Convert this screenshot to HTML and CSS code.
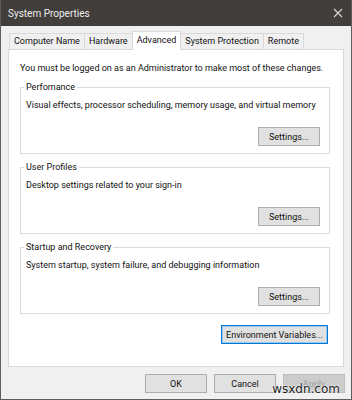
FILE: index.html
```html
<!DOCTYPE html>
<html lang="en">
<head>
  <meta charset="UTF-8">
  <title>System Properties</title>
  <link rel="stylesheet" href="styles.css">
</head>
<body>
  <div class="window">
    <div class="titlebar">
      <span class="title">System Properties</span>
      <svg class="close" width="10" height="10" viewBox="0 0 10 10">
        <path d="M1 1 L9 9 M9 1 L1 9" stroke="#d6d6d6" stroke-width="1.1" fill="none"/>
      </svg>
    </div>

    <div class="tabs">
      <div class="tab">Computer Name</div>
      <div class="tab">Hardware</div>
      <div class="tab active">Advanced</div>
      <div class="tab">System Protection</div>
      <div class="tab">Remote</div>
    </div>

    <div class="panel">
      <p class="notice">You must be logged on as an Administrator to make most of these changes.</p>

      <fieldset class="group">
        <legend>Perfomance</legend>
        <p class="desc">Visual effects, processor scheduling, memory usage, and virtual memory</p>
        <div class="group-actions"><button class="btn">Settings...</button></div>
      </fieldset>

      <fieldset class="group">
        <legend>User Profiles</legend>
        <p class="desc">Desktop settings related to your sign-in</p>
        <div class="group-actions"><button class="btn">Settings...</button></div>
      </fieldset>

      <fieldset class="group">
        <legend>Startup and Recovery</legend>
        <p class="desc">System startup, system failure, and debugging information</p>
        <div class="group-actions"><button class="btn">Settings...</button></div>
      </fieldset>

      <div class="env-row">
        <button class="btn btn-default env">Environment Variables...</button>
      </div>
    </div>

    <div class="footer">
      <button class="btn">OK</button>
      <button class="btn">Cancel</button>
      <button class="btn" disabled>Apply</button>
    </div>

    <span class="watermark">wsxdn.com</span>
  </div>
</body>
</html>
```

FILE: styles.css
```css
body {
  margin: 0;
  padding: 0;
  background: #f0f0f0;
}

.window {
  position: relative;
  width: 352px;
  height: 400px;
  box-sizing: border-box;
  border: 1px solid #5e5e5e;
  border-top: none;
  background: #f0f0f0;
  display: flex;
  flex-direction: column;
  font-family: Roboto, "Liberation Sans", Arial, sans-serif;
  font-size: 9px;
  color: #111;
  overflow: hidden;
}

.titlebar {
  height: 26px;
  margin: 0 -1px;
  padding: 0 9px 0 8px;
  background: #423e3b;
  color: #ededed;
  display: flex;
  align-items: center;
  justify-content: space-between;
  font-size: 10px;
  flex-shrink: 0;
}

.close {
  display: block;
}

/* tab strip */
.tabs {
  display: flex;
  align-items: flex-end;
  padding: 7px 0 0 8px;
  height: 16px;
  position: relative;
  z-index: 1;
}

.tab {
  height: 15px;
  line-height: 15px;
  padding: 0 4px;
  border: 1px solid #d9d9d9;
  border-bottom: none;
  margin-right: -1px;
  background: #f0f0f0;
}

.tab.active {
  height: 18px;
  line-height: 17px;
  margin-bottom: -1px;
  background: #fff;
  position: relative;
  z-index: 2;
}

/* white page */
.panel {
  margin: 0 7px;
  height: 318px;
  box-sizing: border-box;
  border: 1px solid #d9d9d9;
  background: #fff;
  padding: 12px 13px 0 11px;
}

.notice {
  margin: 0 0 7px;
  line-height: 12px;
  white-space: nowrap;
}

.group {
  margin: 0 0 7px;
  padding: 0 9px 7px 5px;
  border: 1px solid #dcdcdc;
}

.group legend {
  padding: 0 2px;
  margin-left: -2px;
  line-height: 12px;
}

.desc {
  margin: 6px 0 16px;
  line-height: 12px;
  white-space: nowrap;
}

.group-actions {
  display: flex;
  justify-content: flex-end;
}

.btn {
  width: 62px;
  height: 19px;
  padding: 0;
  border: 1px solid #adadad;
  background: #e1e1e1;
  font-family: inherit;
  font-size: 9px;
  color: #111;
}

.btn:disabled {
  background: #cccccc;
  border-color: #bfbfbf;
  color: #a0a0a0;
}

.env-row {
  display: flex;
  justify-content: flex-end;
  margin-top: 11px;
  padding-right: 2px;
}

.btn-default {
  border: 1px solid #0078d7;
  box-shadow: inset 0 0 0 1px #9cc7ec;
}

.env {
  width: 107px;
}

.footer {
  display: flex;
  justify-content: flex-end;
  gap: 7px;
  padding: 7px 6px 0 0;
}

.watermark {
  position: absolute;
  right: 11px;
  bottom: 3px;
  font-family: "DejaVu Sans", sans-serif;
  font-size: 12px;
  color: #1e1e1e;
  text-shadow: 0 0 2px #fff, 0 0 2px #fff;
}
```
